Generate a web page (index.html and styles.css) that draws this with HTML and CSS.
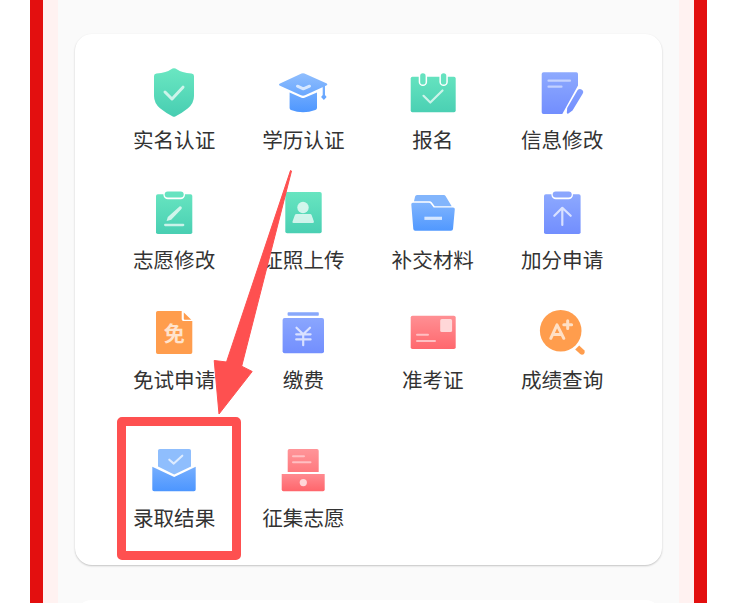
FILE: index.html
```
<!DOCTYPE html>
<html lang="zh-CN">
<head>
<meta charset="utf-8">
<title>考生服务</title>
<link rel="stylesheet" href="styles.css">
</head>
<body>
<svg class="defs" width="0" height="0" aria-hidden="true">
  <defs>
    <linearGradient id="green" x1="0" y1="8" x2="0" y2="54" gradientUnits="userSpaceOnUse"><stop offset="0" stop-color="#69e6c1"/><stop offset="1" stop-color="#48ceb2"/></linearGradient>
    <linearGradient id="blue" x1="0" y1="10" x2="0" y2="52" gradientUnits="userSpaceOnUse"><stop offset="0" stop-color="#92bffd"/><stop offset="1" stop-color="#4b95ff"/></linearGradient>
    <linearGradient id="violet" x1="0" y1="10" x2="0" y2="52" gradientUnits="userSpaceOnUse"><stop offset="0" stop-color="#8eaafe"/><stop offset="1" stop-color="#728efe"/></linearGradient>
    <linearGradient id="red" x1="0" y1="10" x2="0" y2="51" gradientUnits="userSpaceOnUse"><stop offset="0" stop-color="#ff9498"/><stop offset="1" stop-color="#ff6369"/></linearGradient>
    <linearGradient id="tray" x1="0" y1="34" x2="0" y2="51" gradientUnits="userSpaceOnUse"><stop offset="0" stop-color="#ff8a90"/><stop offset="1" stop-color="#ff666c"/></linearGradient>
  </defs>
</svg>
<main class="frame">
  <section class="card">
    <div class="item">
      <svg class="icon" viewBox="0 0 60 60"><path fill="url(#green)" d="M28.5 6.6Q30 5.7 31.5 6.6Q38 11.2 47.5 11.5Q50 11.6 50 14V34Q50 41 44 46.3Q38 51.2 31.2 54.4Q30 55 28.8 54.4Q22 51.2 16 46.3Q10 41 10 34V14Q10 11.6 12.5 11.5Q22 11.2 28.5 6.6Z"/><path class="line" stroke-width="3" d="M21 30L28 37L39 25.2"/></svg>
      <span class="label">实名认证</span>
    </div>
    <div class="item">
      <svg class="icon" viewBox="0 0 60 60"><path fill="url(#blue)" d="M28.5 11.6Q30 10.8 31.5 11.6L53.3 21.3Q55.3 22.5 53.3 23.6L32 33.2Q30 34.1 28 33.2L7 23.8Q5 22.6 7 21.4ZM16.6 30.5L28.5 35.7Q30 36.4 31.5 35.7L44 30.5V46Q43.9 47.4 42.3 48Q30 52.4 18 48Q16.6 47.4 16.6 46ZM49.7 23H52V33L53.6 35L50.9 38L48.1 35L49.7 33Z"/><path class="line" stroke-width="3" d="M24.5 24.2L30.3 26.8L36.5 24.2"/></svg>
      <span class="label">学历认证</span>
    </div>
    <div class="item">
      <svg class="icon" viewBox="0 0 60 60"><rect x="7.7" y="14.7" width="45" height="35.5" rx="1.7" fill="url(#green)"/><g fill="#fff"><rect x="15.7" y="9.7" width="8.4" height="14.4" rx="4.2"/><rect x="36.4" y="9.7" width="8.4" height="14.4" rx="4.2"/></g><g fill="#65e2bf"><rect x="17.2" y="11.2" width="5.4" height="11.4" rx="2.7"/><rect x="37.9" y="11.2" width="5.4" height="11.4" rx="2.7"/></g><path class="line" stroke-width="2.2" d="M20.5 33.8L27.3 40.5L39.5 28.5"/></svg>
      <span class="label">报名</span>
    </div>
    <div class="item">
      <svg class="icon" viewBox="0 0 60 60"><path fill="url(#violet)" d="M11.5 10.3H44.3Q46 10.3 46 12V23.5L30.3 52H11.5Q9.7 52 9.7 50.2V12Q9.7 10.3 11.5 10.3ZM45.5 28.3Q47.5 26 50 27.8Q52.2 29.8 50.5 32L40.5 48.6L36 51.7Q34.8 51.7 34.8 50.5L35.2 46Z"/><path class="line dim" stroke-width="2.2" d="M16.5 18.7H38M16.5 24.7H29.5"/></svg>
      <span class="label">信息修改</span>
    </div>
    <div class="item">
      <svg class="icon" viewBox="0 0 60 60"><rect x="12" y="12.2" width="36.3" height="39.8" rx="1.8" fill="url(#green)"/><rect x="19.4" y="8.2" width="21.6" height="9" rx="4.5" fill="#fff"/><rect x="20.7" y="9.5" width="19" height="6" rx="3" fill="#66e3c0"/><path class="soft" d="M34.7 25.2Q36 23.5 37.4 24.7Q38.5 26 37.2 27.3L27.2 37.8L22.6 38.9L23.8 34.9Z"/><path class="line" stroke-width="2.3" d="M21.2 43H39.2"/></svg>
      <span class="label">志愿修改</span>
    </div>
    <div class="item">
      <svg class="icon" viewBox="0 0 60 60"><rect x="12.3" y="10" width="36.4" height="41.2" rx="1.8" fill="url(#green)"/><circle class="soft" cx="30" cy="25.5" r="5.7"/><path class="soft" d="M23.5 32H37Q38.3 32 38.7 33.2L40.9 39.5Q41.1 41 39.6 41H20.6Q19.1 41 19.5 39.5L21.8 33.2Q22.2 32 23.5 32Z"/></svg>
      <span class="label">证照上传</span>
    </div>
    <div class="item">
      <svg class="icon" viewBox="0 0 60 60"><path fill="#82b5fc" d="M14 13H40.8Q42 13 42.7 14.2L48.7 24.2H31.7L28.7 20.3Q28 19.2 26.5 19.2H11L12.1 14.5Q12.5 13 14 13Z"/><path fill="url(#blue)" d="M9.8 20.7H26Q27 20.7 27.6 21.5L30.7 25.6H50Q52 25.6 51.8 27.3L50 47Q49.8 48.7 48 48.7H12.2Q10.5 48.7 10.3 47L8.3 22.5Q8.2 20.7 9.8 20.7Z"/><rect class="soft" x="21.4" y="34.7" width="17.6" height="3.2"/></svg>
      <span class="label">补交材料</span>
    </div>
    <div class="item">
      <svg class="icon" viewBox="0 0 60 60"><rect x="12" y="12.2" width="36.6" height="39.8" rx="1.8" fill="url(#violet)"/><rect x="19.4" y="8.2" width="21.6" height="9" rx="4.5" fill="#fff"/><rect x="20.7" y="9.5" width="19" height="6" rx="3" fill="#8ba6fd"/><path class="line" stroke-width="2.2" d="M30.3 43V26M22.3 33.8L30.3 25.8L38.7 33.8"/></svg>
      <span class="label">加分申请</span>
    </div>
    <div class="item">
      <svg class="icon" viewBox="0 0 60 60"><path fill="#ff9d4d" d="M13.8 9H37.7V17.3Q37.7 19 39.4 19H48.3V50.2Q48.3 52 46.5 52H13.8Q12 52 12 50.2V10.8Q12 9 13.8 9ZM39.8 10.4L47.3 17.7H40.8Q39.8 17.7 39.8 16.7Z"/><text class="glyph" x="30.3" y="39.3">免</text></svg>
      <span class="label">免试申请</span>
    </div>
    <div class="item">
      <svg class="icon" viewBox="0 0 60 60"><rect x="14.6" y="10.2" width="31.2" height="3.5" rx=".8" fill="#88a8fb"/><rect x="9.6" y="16" width="41.4" height="35.2" rx="2" fill="url(#violet)"/><path class="line" stroke-width="2.2" d="M23.5 25.7L30.2 32.2L37 25.7M23.2 32.3H37.6M23.2 37.4H37.6M30.2 32.3V43.2"/></svg>
      <span class="label">缴费</span>
    </div>
    <div class="item">
      <svg class="icon" viewBox="0 0 60 60"><rect x="7.7" y="13.7" width="45" height="33.4" rx="1.8" fill="url(#red)"/><rect x="37.2" y="17.1" width="11.9" height="12.9" rx="1.6" fill="#ffd7d8"/><path class="line faint" stroke-width="2" d="M14 32.7H25M14 39H32"/></svg>
      <span class="label">准考证</span>
    </div>
    <div class="item">
      <svg class="icon" viewBox="0 0 60 60"><circle cx="28.7" cy="28.8" r="20.8" fill="#ff9d4d"/><path d="M43.2 47.4L47.2 43.4L52.2 48.3Q53.5 50 52 52Q50 53.5 48.2 52Z" fill="#ff9d4d"/><path class="line warm" stroke-width="3" d="M18.8 36.3L25 22.8L31.8 36.3M21.5 32.6H29.5M35.7 18.8V26.6M31.8 22.7H39.6"/></svg>
      <span class="label">成绩查询</span>
    </div>
    <div class="item">
      <svg class="icon" viewBox="0 0 60 60"><path fill="#8fbefd" d="M15.8 9H45.2Q47 9 47 10.8V26.5L30.2 34.4L14 26.5V10.8Q14 9 15.8 9Z"/><path fill="url(#blue)" d="M8.3 26.8L30.2 37L51.7 26.8V49.5Q51.7 51.3 49.9 51.3H10.1Q8.3 51.3 8.3 49.5Z"/><path class="line" stroke-width="2.1" d="M25.3 19.7L29.8 23.6L38.3 15.7"/></svg>
      <span class="label">录取结果</span>
    </div>
    <div class="item">
      <svg class="icon" viewBox="0 0 60 60"><path fill="url(#red)" d="M16.3 9H44Q45.7 9 45.7 10.7V32H14.7V10.7Q14.7 9 16.3 9Z"/><path fill="url(#tray)" d="M8.7 34H51.7V49.6Q51.7 51.3 50 51.3H10.4Q8.7 51.3 8.7 49.6Z"/><circle cx="30.3" cy="42.6" r="3.6" fill="#ffd7d8"/><path class="line faint" stroke-width="2" d="M20 16.3H31M20 22.2H37.5"/></svg>
      <span class="label">征集志愿</span>
    </div>
  </section>
  <section class="card-next"></section>
</main>
<div class="highlight"></div>
<svg class="pointer" viewBox="0 0 42 248" aria-hidden="true"><path fill="#fe5050" stroke="#fe5050" stroke-width="1" stroke-linejoin="round" d="M78.5 2.5L79.5 3L29.7 198.2L40.2 203.5L7 246L2.2 192.5L14.5 194Z"/></svg>
</body>
</html>
```
FILE: styles.css
```
* {
  box-sizing: border-box;
}

body {
  margin: 0;
  height: 603px;
  overflow: hidden;
  position: relative;
  background: #fff;
  font-family: "Noto Sans CJK SC", sans-serif;
}

.defs {
  position: absolute;
}

.frame {
  width: 677px;
  height: 603px;
  margin-left: 30px;
  padding: 34px 17px 0;
  overflow: hidden;
  border: solid #e30f0f;
  border-width: 0 13px;
  background: linear-gradient(to right, #fff2f1 15px, #fafafa 15px, #fafafa 636px, #fff2f1 636px) padding-box;
}

.card {
  width: 587px;
  height: 531px;
  margin-left: 15px;
  padding: 28px 35.2px 0 34.4px;
  display: grid;
  grid-template-columns: repeat(4, 1fr);
  grid-template-rows: 120px 120px 138px 120px;
  border-radius: 17px;
  background: #fff;
  box-shadow: 0 1px 2px rgba(0, 0, 0, .22);
}

.card-next {
  width: 587px;
  height: 60px;
  margin: 35px 0 0 15px;
  border-radius: 17px;
  background: #fff;
}

.item {
  display: flex;
  flex-direction: column;
  align-items: center;
}

.icon {
  display: block;
  flex: none;
  width: 60px;
  height: 60px;
}

.label {
  margin-top: 1px;
  color: #333;
  font-size: 20.6px;
  line-height: 33px;
  white-space: nowrap;
}

.line {
  fill: none;
  stroke: rgba(255, 255, 255, .7);
  stroke-linecap: round;
  stroke-linejoin: round;
}

.dim {
  stroke: rgba(255, 255, 255, .5);
}

.faint {
  stroke: #ffbfc2;
}

.warm {
  stroke: #ffe0c5;
}

.soft {
  fill: rgba(255, 255, 255, .72);
}

.glyph {
  fill: #ffe3cc;
  font-size: 21px;
  font-weight: 700;
  text-anchor: middle;
}

.highlight {
  position: absolute;
  left: 117px;
  top: 417px;
  width: 124px;
  height: 143px;
  border: 9px solid #fe5050;
  border-radius: 5px;
}

.pointer {
  position: absolute;
  left: 212px;
  top: 168px;
  width: 42px;
  height: 248px;
  overflow: visible;
}
```
